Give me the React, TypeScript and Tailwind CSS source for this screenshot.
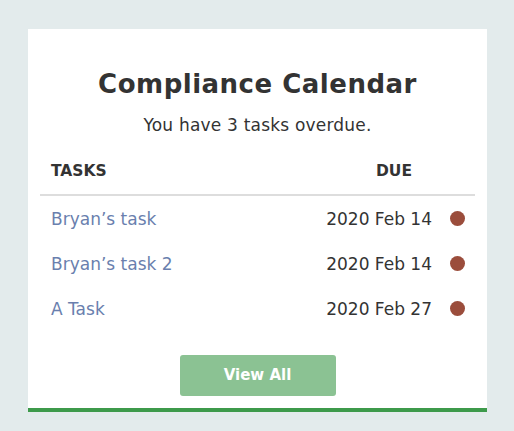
import React from "react";

const tasks = [
  { name: "Bryan\u2019s task", due: "2020 Feb 14" },
  { name: "Bryan\u2019s task 2", due: "2020 Feb 14" },
  { name: "A Task", due: "2020 Feb 27" },
];

export default function App() {
  return (
    <div
      className="min-h-screen w-[514px] h-[431px] bg-[#e3ebec] pt-[29px] pl-[28px]"
      style={{ fontFamily: "'DejaVu Sans', 'Noto Sans', sans-serif" }}
    >
      <div className="w-[459px] bg-white border-b-4 border-[#3d9a4b] px-3 pt-[39px] pb-[12px]">
        <h1 className="text-center text-[26px] leading-[32px] font-bold text-[#333333] tracking-[0.5px]">
          Compliance Calendar
        </h1>
        <p className="mt-[13px] text-center text-[17px] leading-[24px] text-[#333333] tracking-[0.2px]">
          You have 3 tasks overdue.
        </p>
        <div className="mt-[22px] flex items-center justify-between pl-[11px] pr-[63px] pb-[11px] border-b-2 border-[#dddddd]">
          <span className="text-[15.5px] leading-[24px] font-bold text-[#333333]">TASKS</span>
          <span className="text-[15.5px] leading-[24px] font-bold text-[#333333]">DUE</span>
        </div>
        <div>
          {tasks.map((t) => (
            <div key={t.name} className="flex h-[45px] items-center pl-[11px] pr-[10px]">
              <span className="flex-1 text-[17px] leading-[24px] text-[#6a7fae]">{t.name}</span>
              <span className="text-[17px] leading-[24px] text-[#333333]">{t.due}</span>
              <span className="ml-[18px] h-[15px] w-[15px] rounded-full bg-[#9b4d3c]" />
            </div>
          ))}
        </div>
        <div className="mt-[24px] flex justify-center">
          <button className="h-[41px] w-[156px] rounded-[3px] bg-[#8bc293] text-[15px] font-bold text-white">
            View All
          </button>
        </div>
      </div>
    </div>
  );
}
